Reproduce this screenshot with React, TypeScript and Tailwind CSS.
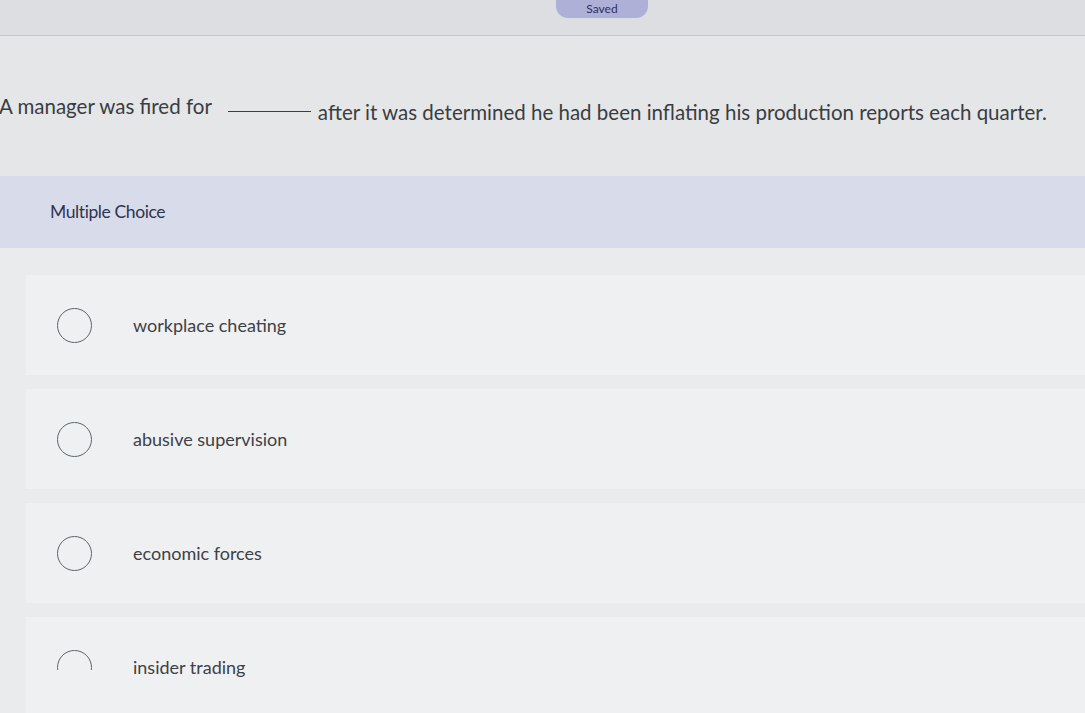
import React from 'react'

const options = ['workplace cheating', 'abusive supervision', 'economic forces', 'insider trading']

export default function App() {
  return (
    <div
      className="relative h-[713px] w-[1085px] overflow-hidden bg-[#e9ebed] text-[#3a3d42]"
      style={{ fontFamily: 'Lato, "Open Sans", sans-serif' }}
    >
      <div className="relative h-[36px] border-b border-[#c3c6cc] bg-[#dcdee2]">
        <div className="absolute left-[556px] top-[-8px] flex h-[26px] w-[92px] items-end justify-center rounded-b-[12px] bg-[#aeb0d8] pb-[3px] text-[12px] leading-none text-[#2e3160]">
          Saved
        </div>
      </div>

      <div className="flex h-[140px] items-center bg-[#e4e6e8] text-[20.5px] leading-none">
        <span className="-ml-[1px]">A manager was fired for</span>
        <span className="ml-[16px] mr-[7px] mt-[10px] inline-block w-[83px] border-b border-[#3a3d42]" />
        <span className="mt-[12px]">after it was determined he had been inflating his production reports each quarter.</span>
      </div>

      <div className="flex h-[72px] items-center bg-[#d8dcea] pl-[50px] text-[17.5px] tracking-[-0.4px] text-[#2f3350]">
        Multiple Choice
      </div>

      <div className="flex flex-col gap-[14px] pt-[27px]">
        {options.map((opt, i) => (
          <div key={opt} className="ml-[26px] flex h-[100px] items-center bg-[#eff0f1]">
            <div className={`ml-[31px] w-[35px] ${i === 3 ? 'h-[20px] -mt-[14px] overflow-hidden' : 'h-[35px]'}`}>
              <div className="h-[35px] w-[35px] rounded-full border-[1.5px] border-[#5b6570]" />
            </div>
            <span className="ml-[41px] text-[18px] text-[#3e4147]">{opt}</span>
          </div>
        ))}
      </div>
    </div>
  )
}
